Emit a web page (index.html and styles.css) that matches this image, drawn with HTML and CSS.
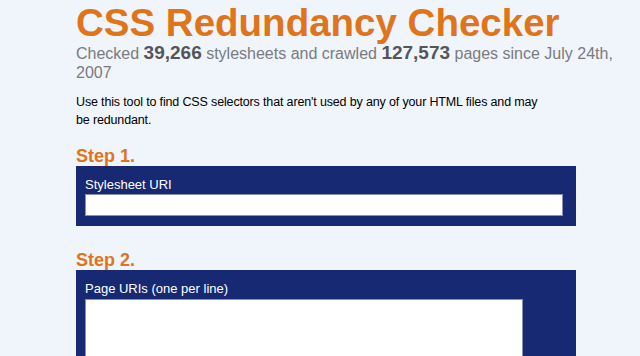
FILE: index.html
```html
<!DOCTYPE html>
<html>
<head>
<meta charset="utf-8">
<title>CSS Redundancy Checker</title>
<link rel="stylesheet" href="styles.css">
</head>
<body>
<div class="page">
  <h1 class="title">CSS Redundancy Checker</h1>
  <p class="stats">Checked <strong>39,266</strong> stylesheets and crawled <strong>127,573</strong> pages since July 24th, 2007</p>
  <p class="intro">Use this tool to find CSS selectors that aren't used by any of your HTML files and may be redundant.</p>
  <h2 class="step-title">Step 1.</h2>
  <div class="step">
    <label class="field-label" for="css">Stylesheet URI</label>
    <input class="uri-input" id="css" type="text">
  </div>
  <h2 class="step-title step-title-2">Step 2.</h2>
  <div class="step">
    <label class="field-label" for="pages">Page URIs (one per line)</label>
    <textarea class="uri-area" id="pages"></textarea>
  </div>
</div>
</body>
</html>
```

FILE: styles.css
```css
html, body {
  margin: 0;
  padding: 0;
  background: #f0f5fc;
}
body {
  font-family: "Liberation Sans", Arial, sans-serif;
}
.page {
  width: 500px;
  margin-left: 76px;
  padding-top: 2px;
}
.title {
  margin: 0;
  font-size: 38.5px;
  line-height: 42px;
  font-weight: bold;
  color: #e0741a;
  white-space: nowrap;
}
.stats {
  width: 560px;
  margin: 0;
  font-size: 16px;
  line-height: 19px;
  color: #7a7a80;
}
.stats strong {
  font-size: 19px;
  line-height: 18px;
  color: #555559;
}
.intro {
  width: 475px;
  margin: 11px 0 0;
  font-size: 12.5px;
  letter-spacing: -0.15px;
  line-height: 18px;
  color: #000;
}
.step-title {
  margin: 17px 0 0;
  font-size: 18px;
  line-height: 20px;
  font-weight: bold;
  color: #e0741a;
}
.step-title-2 {
  margin-top: 24px;
}
.step {
  display: flex;
  flex-direction: column;
  align-items: flex-start;
  background: #182973;
  padding: 10px 13px 10px 9px;
}
.field-label {
  font-size: 13px;
  line-height: 17px;
  color: #fff;
}
.uri-input {
  box-sizing: border-box;
  width: 478px;
  height: 22px;
  margin: 1px 0 0;
  border: 1px solid #8890b4;
  background: #fff;
  padding: 0 3px;
}
.uri-area {
  box-sizing: border-box;
  width: 438px;
  height: 100px;
  margin: 2px 0 0;
  border: 1px solid #8890b4;
  background: #fff;
  resize: none;
}
```
